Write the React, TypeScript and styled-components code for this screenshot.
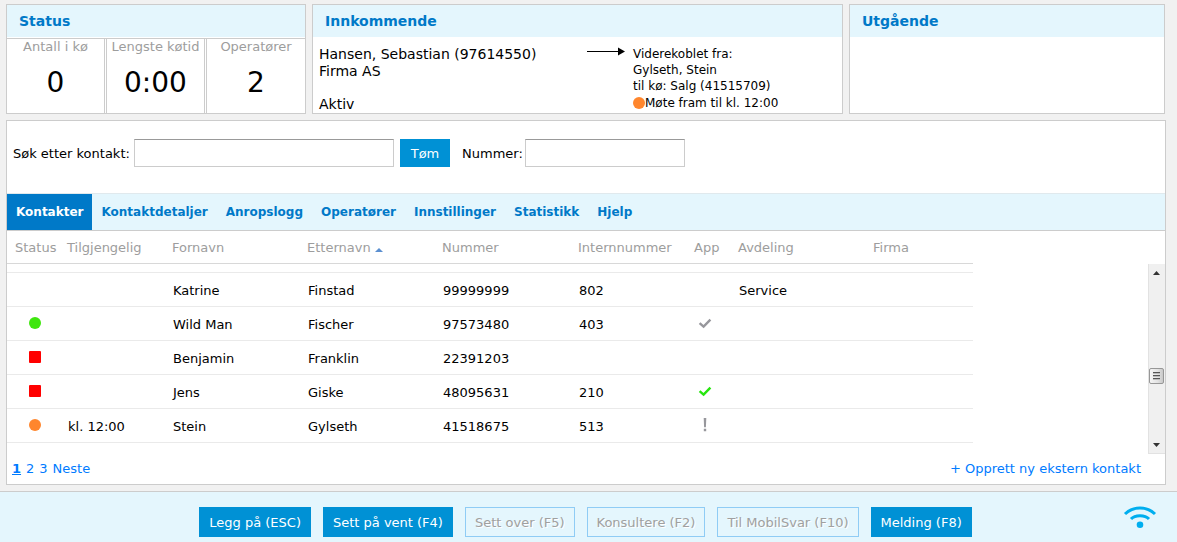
import React from "react";
import styled, { createGlobalStyle } from "styled-components";

const Global = createGlobalStyle`
  *, *::before, *::after { box-sizing: border-box; }
  html { background: #e4f6fd; }
  body {
    margin: 0;
    background: #f1f1f1;
    color: #000;
    font-family: Verdana, "DejaVu Sans", sans-serif;
    font-size: 13px;
    line-height: 16px;
  }
  button, input { font: inherit; }
`;

const Page = styled.div`
  display: flex;
  flex-direction: column;
`;

const TopRow = styled.div`
  display: grid;
  grid-template-columns: 300px 531fr 316fr;
  gap: 6px;
  padding: 4px 12px 6px 6px;
`;

const Panel = styled.section`
  display: flex;
  flex-direction: column;
  min-height: 110px;
  background: #fff;
  border: 1px solid #ccc;
`;

const PanelTitle = styled.h2`
  margin: 0;
  padding: 8px 12px;
  background: #e4f6fd;
  color: #0079c8;
  font-size: 14px;
  line-height: 16px;
  font-weight: bold;
`;

const Counters = styled.dl`
  flex: 1;
  display: grid;
  grid-template-columns: 98px 1fr 1fr;
  margin: 1px 0 0;
  gap: 1px;
  border-top: 1px solid #ccc;
`;

const Counter = styled.div`
  display: flex;
  flex-direction: column;
  align-items: center;
  white-space: nowrap;
  & + & { border-left: 1px solid #ccc; }
  &:not(:last-child) { border-right: 1px solid #ccc; }
`;

const CounterLabel = styled.dt`
  color: #9d9d9d;
  line-height: 16px;
`;

const CounterValue = styled.dd`
  margin: 12px 0 0;
  font-size: 28px;
  line-height: 32px;
`;

const CallBody = styled.div`
  flex: 1;
  display: grid;
  grid-template-columns: 268px 46px 1fr;
  padding: 9px 6px 0;
`;

const Caller = styled.div`
  display: flex;
  flex-direction: column;
  font-size: 14px;
  line-height: 17px;
  white-space: nowrap;
`;

const CallState = styled.span`
  margin-top: 16px;
`;

const Arrow = styled.svg`
  display: block;
`;

const Forward = styled.div`
  display: flex;
  flex-direction: column;
  font-size: 12px;
  line-height: 16px;
  white-space: nowrap;
`;

const Presence = styled.span`
  display: flex;
  align-items: center;
  margin-top: 1px;
`;

const Dot = styled.span<{ $color: string; $square?: boolean }>`
  display: block;
  width: 12px;
  height: 12px;
  background: ${(p) => p.$color};
  border-radius: ${(p) => (p.$square ? "1px" : "50%")};
`;

const Main = styled.main`
  margin: 0 11px 6px 6px;
  background: #fff;
  border: 1px solid #ccc;
`;

const SearchBar = styled.form`
  display: flex;
  align-items: center;
  padding: 18px 6px 26px;
  gap: 6px;
  white-space: nowrap;
`;

const FieldLabel = styled.label<{ $width: number }>`
  width: ${(p) => p.$width}px;
  padding-top: 2px;
`;

const Field = styled.input<{ $width: number }>`
  width: ${(p) => p.$width}px;
  height: 28px;
  padding: 0 6px;
  border: 1px solid #ccc;
  border-top-color: #999;
  border-radius: 0;
  background: #fff;
`;

const Button = styled.button`
  height: 28px;
  padding: 2px 10px 0;
  border: 0;
  background: #0091d5;
  color: #fff;
  white-space: nowrap;
`;

const ClearButton = styled(Button)`
  width: 50px;
  margin-right: 6px;
`;

const Tabs = styled.nav`
  display: flex;
  height: 38px;
  border-top: 1px solid #e0e9ed;
  border-bottom: 1px solid #ccc;
  background: #e4f6fd;
`;

const Tab = styled.a<{ $active?: boolean }>`
  display: flex;
  align-items: center;
  padding: 0 9px;
  background: ${(p) => (p.$active ? "#0079c8" : "transparent")};
  color: ${(p) => (p.$active ? "#fff" : "#0079c8")};
  font-size: 12px;
  font-weight: bold;
  text-decoration: none;
`;

const ListArea = styled.div`
  display: flex;
  justify-content: space-between;
`;

const Table = styled.table`
  width: 966px;
  table-layout: fixed;
  border-collapse: separate;
  border-spacing: 0;
  align-self: flex-start;
`;

const Th = styled.th`
  height: 33px;
  padding: 2px 0 0 8px;
  border-bottom: 1px solid #d8d8d8;
  color: #9d9d9d;
  font-weight: normal;
  text-align: left;
  white-space: nowrap;
`;

const Td = styled.td`
  height: 34px;
  padding: 2px 0 0 9px;
  border-bottom: 1px solid #eaeaea;
  white-space: nowrap;
`;

const SpacerCell = styled(Td)`
  height: 9px;
  padding: 0;
`;

const StatusCell = styled(Td)`
  padding: 0 0 2px 22px;
`;

const MarkCell = styled(Td)`
  padding: 0 0 2px 12px;
  & > svg { display: block; }
`;

const SortArrow = styled.svg`
  margin-left: 4px;
`;

const ScrollBar = styled.div`
  display: flex;
  flex-direction: column;
  align-items: center;
  width: 17px;
  height: 190px;
  margin-top: 33px;
  padding: 5px 1px 5px 0;
  border-left: 1px solid #e2e2e2;
  border-bottom: 1px solid #e2e2e2;
  background: #f0f0f0;
`;

const Thumb = styled.div`
  width: 15px;
  height: 16px;
  margin: 92px 0 auto;
  border: 1px solid #979797;
  border-radius: 2px;
  background: linear-gradient(to right, #f5f5f5, #e2e2e2 60%, #c8c8c8);
  & > svg { display: block; }
`;

const ListFooter = styled.div`
  display: flex;
  justify-content: space-between;
  padding: 7px 24px 7px 5px;
`;

const Pages = styled.nav`
  display: flex;
  gap: 5px;
`;

const Link = styled.a<{ $current?: boolean }>`
  color: #007bff;
  font-weight: ${(p) => (p.$current ? "bold" : "normal")};
  text-decoration: ${(p) => (p.$current ? "underline" : "none")};
`;

const ActionBar = styled.footer`
  display: grid;
  grid-template-columns: 1fr auto 1fr;
  padding: 15px 20px 4px 14px;
  border-top: 1px solid #ccc;
  background: #e4f6fd;
`;

const Actions = styled.div`
  grid-column: 2;
  display: flex;
  gap: 12px;
`;

const ActionButton = styled(Button)`
  height: 30px;
  &:disabled {
    padding: 2px 9px 0;
    border: 1px solid #8fccf5;
    background: transparent;
    color: #a0a0a0;
    text-shadow: 1px 1px 0 #fff;
  }
`;

const Wifi = styled.svg`
  justify-self: end;
  overflow: visible;
`;

type Mark = "grey" | "green" | "alert";
interface Contact {
  status?: "free" | "busy" | "away";
  until?: string;
  first: string;
  last: string;
  number: string;
  ext?: string;
  mark?: Mark;
  dept?: string;
}

const contacts: Contact[] = [
  { first: "Katrine", last: "Finstad", number: "99999999", ext: "802", dept: "Service" },
  { status: "free", first: "Wild Man", last: "Fischer", number: "97573480", ext: "403", mark: "grey" },
  { status: "busy", first: "Benjamin", last: "Franklin", number: "22391203" },
  { status: "busy", first: "Jens", last: "Giske", number: "48095631", ext: "210", mark: "green" },
  { status: "away", until: "kl. 12:00", first: "Stein", last: "Gylseth", number: "41518675", ext: "513", mark: "alert" },
];

const statusColors = { free: "#3fe60f", busy: "#ff0000", away: "#ff862d" };
const columnWidths = [52, 105, 135, 135, 136, 116, 44, 135, 108];
const columns = ["Status", "Tilgjengelig", "Fornavn", "Etternavn", "Nummer", "Internnummer", "App", "Avdeling", "Firma"];
const tabs = ["Kontakter", "Kontaktdetaljer", "Anropslogg", "Operatører", "Innstillinger", "Statistikk", "Hjelp"];
const counters = [
  ["Antall i kø", "0"],
  ["Lengste køtid", "0:00"],
  ["Operatører", "2"],
];
const actions = [
  { text: "Legg på (ESC)", enabled: true },
  { text: "Sett på vent (F4)", enabled: true },
  { text: "Sett over (F5)", enabled: false },
  { text: "Konsultere (F2)", enabled: false },
  { text: "Til MobilSvar (F10)", enabled: false },
  { text: "Melding (F8)", enabled: true },
];

function AppMark({ mark }: { mark: Mark }) {
  if (mark === "alert") {
    return (
      <svg width="14" height="14" viewBox="0 0 14 14" aria-label="Varsel">
        <path d="M5.7 0h2.6l-.4 9.2H6.1z M5.8 10.8h2.4v2.4H5.8z" fill="#97979c" />
      </svg>
    );
  }
  return (
    <svg width="14" height="14" viewBox="0 0 14 14" aria-label="Har app">
      <path d="M1.6 7.1 5.6 10.7 12.4 3.7" fill="none" strokeWidth="2.4" stroke={mark === "green" ? "#27e60f" : "#97979c"} />
    </svg>
  );
}

export default function App() {
  return (
    <Page>
      <Global />
      <TopRow>
        <Panel>
          <PanelTitle>Status</PanelTitle>
          <Counters>
            {counters.map(([label, value]) => (
              <Counter key={label}>
                <CounterLabel>{label}</CounterLabel>
                <CounterValue>{value}</CounterValue>
              </Counter>
            ))}
          </Counters>
        </Panel>
        <Panel>
          <PanelTitle>Innkommende</PanelTitle>
          <CallBody>
            <Caller>
              <span>Hansen, Sebastian (97614550)</span>
              <span>Firma AS</span>
              <CallState>Aktiv</CallState>
            </Caller>
            <Arrow width="38" height="12" viewBox="0 0 38 12" aria-hidden="true">
              <path d="M0 5.5H32" stroke="#000" />
              <path d="M31 1.5 38 5.5 31 9.5z" />
            </Arrow>
            <Forward>
              <span>Viderekoblet fra:</span>
              <span>Gylseth, Stein</span>
              <span>til kø: Salg (41515709)</span>
              <Presence>
                <Dot $color={statusColors.away} />
                Møte fram til kl. 12:00
              </Presence>
            </Forward>
          </CallBody>
        </Panel>
        <Panel>
          <PanelTitle>Utgående</PanelTitle>
        </Panel>
      </TopRow>

      <Main>
        <SearchBar onSubmit={(e) => e.preventDefault()}>
          <FieldLabel htmlFor="contact" $width={115}>Søk etter kontakt:</FieldLabel>
          <Field id="contact" type="text" $width={260} />
          <ClearButton type="reset">Tøm</ClearButton>
          <FieldLabel htmlFor="number" $width={57}>Nummer:</FieldLabel>
          <Field id="number" type="text" $width={160} />
        </SearchBar>
        <Tabs>
          {tabs.map((name, i) => (
            <Tab key={name} href="#" $active={i === 0}>{name}</Tab>
          ))}
        </Tabs>
        <ListArea>
          <Table>
            <colgroup>
              {columnWidths.map((w, i) => (
                <col key={i} width={w} />
              ))}
            </colgroup>
            <thead>
              <tr>
                {columns.map((name) => (
                  <Th key={name} scope="col">
                    {name}
                    {name === "Etternavn" && (
                      <SortArrow width="8" height="4" viewBox="0 0 8 4" aria-hidden="true">
                        <path d="M4 0 8 4H0z" fill="#5b8fd0" />
                      </SortArrow>
                    )}
                  </Th>
                ))}
              </tr>
            </thead>
            <tbody>
              <tr>
                <SpacerCell colSpan={9} />
              </tr>
              {contacts.map((c) => (
                <tr key={c.number}>
                  <StatusCell>
                    {c.status && <Dot $color={statusColors[c.status]} $square={c.status === "busy"} />}
                  </StatusCell>
                  <Td>{c.until}</Td>
                  <Td>{c.first}</Td>
                  <Td>{c.last}</Td>
                  <Td>{c.number}</Td>
                  <Td>{c.ext}</Td>
                  <MarkCell>{c.mark && <AppMark mark={c.mark} />}</MarkCell>
                  <Td>{c.dept}</Td>
                  <Td />
                </tr>
              ))}
            </tbody>
          </Table>
          <ScrollBar>
            <svg width="7" height="7" viewBox="0 0 7 7" aria-hidden="true">
              <path d="M3.5 2 7 6H0z" fill="#333" />
            </svg>
            <Thumb>
              <svg width="13" height="14" viewBox="0 0 13 14" aria-hidden="true">
                <path d="M3 3.5H10M3 6.5H10M3 9.5H10" stroke="#555" />
                <path d="M3 4.5H10M3 7.5H10M3 10.5H10" stroke="#bbb" />
              </svg>
            </Thumb>
            <svg width="7" height="7" viewBox="0 0 7 7" aria-hidden="true">
              <path d="M0 2H7L3.5 6z" fill="#333" />
            </svg>
          </ScrollBar>
        </ListArea>
        <ListFooter>
          <Pages>
            <Link href="#" $current>1</Link>
            <Link href="#">2</Link>
            <Link href="#">3</Link>
            <Link href="#">Neste</Link>
          </Pages>
          <Link href="#">+ Opprett ny ekstern kontakt</Link>
        </ListFooter>
      </Main>

      <ActionBar>
        <Actions>
          {actions.map((a) => (
            <ActionButton key={a.text} type="button" disabled={!a.enabled}>{a.text}</ActionButton>
          ))}
        </Actions>
        <Wifi width="34" height="24" viewBox="0 0 34 24" aria-label="Tilkoblet">
          <path d="M2 7C10 -1 24 -1 32 7" fill="none" stroke="#00aeef" strokeWidth="3" />
          <path d="M8 12C12 7.5 22 7.5 26 12" fill="none" stroke="#00aeef" strokeWidth="3" />
          <circle cx="17" cy="17.7" r="3.3" fill="#00aeef" />
        </Wifi>
      </ActionBar>
    </Page>
  );
}
